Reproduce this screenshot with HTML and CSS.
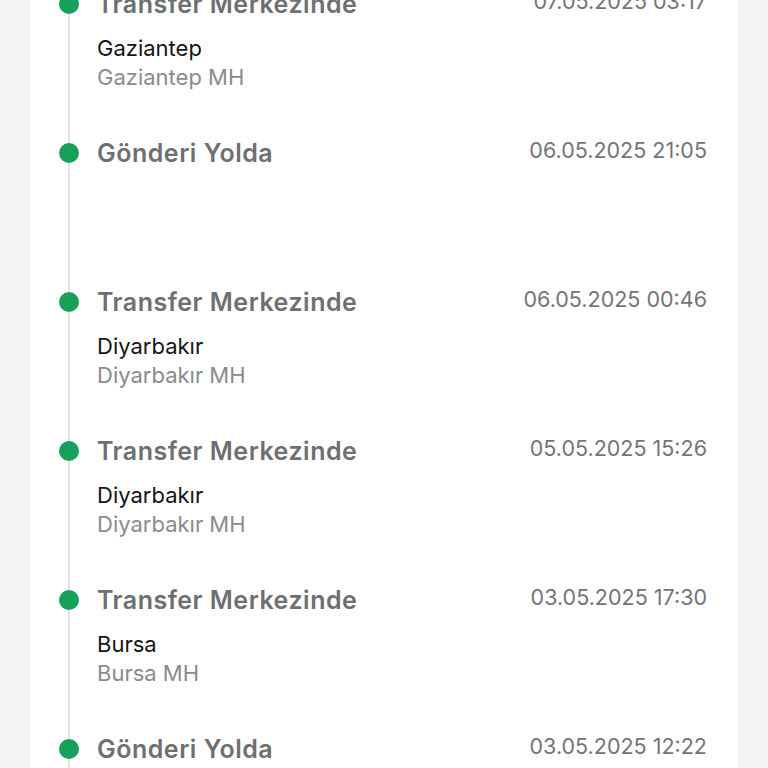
FILE: index.html
```html
<!DOCTYPE html>
<html lang="tr">
<head>
  <meta charset="UTF-8" />
  <title>Gönderi Hareketleri</title>
  <link rel="stylesheet" href="styles.css">
</head>
<body>

  <div class="card">
    <ul class="timeline">
      <li class="event">
        <span class="dot"></span>
        <div class="event-body">
          <div class="event-head">
            <span class="status">Transfer Merkezinde</span>
            <span class="date">07.05.2025 03:17</span>
          </div>
          <div class="city">Gaziantep</div>
          <div class="branch">Gaziantep MH</div>
        </div>
      </li>
      <li class="event">
        <span class="dot"></span>
        <div class="event-body">
          <div class="event-head">
            <span class="status">Gönderi Yolda</span>
            <span class="date">06.05.2025 21:05</span>
          </div>
          <div class="city"></div>
          <div class="branch"></div>
        </div>
      </li>
      <li class="event">
        <span class="dot"></span>
        <div class="event-body">
          <div class="event-head">
            <span class="status">Transfer Merkezinde</span>
            <span class="date">06.05.2025 00:46</span>
          </div>
          <div class="city">Diyarbakır</div>
          <div class="branch">Diyarbakır MH</div>
        </div>
      </li>
      <li class="event">
        <span class="dot"></span>
        <div class="event-body">
          <div class="event-head">
            <span class="status">Transfer Merkezinde</span>
            <span class="date">05.05.2025 15:26</span>
          </div>
          <div class="city">Diyarbakır</div>
          <div class="branch">Diyarbakır MH</div>
        </div>
      </li>
      <li class="event">
        <span class="dot"></span>
        <div class="event-body">
          <div class="event-head">
            <span class="status">Transfer Merkezinde</span>
            <span class="date">03.05.2025 17:30</span>
          </div>
          <div class="city">Bursa</div>
          <div class="branch">Bursa MH</div>
        </div>
      </li>
      <li class="event">
        <span class="dot"></span>
        <div class="event-body">
          <div class="event-head">
            <span class="status">Gönderi Yolda</span>
            <span class="date">03.05.2025 12:22</span>
          </div>
          <div class="city"></div>
          <div class="branch"></div>
        </div>
      </li>
    </ul>
  </div>

</body>
</html>
```

FILE: styles.css
```css
body {
  margin: 0;
  background-color: #f3f4f6;
  font-family: Inter, "Noto Sans", sans-serif;
  overflow: hidden;
}

.card {
  margin: -11px 30px 0 30px;
  background: #fff;
  box-shadow: 0 0 3px rgba(0, 0, 0, 0.06);
  padding: 0 31px 0 29px;
}

.timeline {
  list-style: none;
  margin: 0;
  padding: 0;
  position: relative;
}

/* vertical line behind the dots */
.timeline::before {
  content: "";
  position: absolute;
  left: 9px;
  top: 0;
  bottom: 0;
  width: 2px;
  background: #e2e3e5;
}

.event {
  display: flex;
  gap: 18px;
  height: 149px;
}

.dot {
  flex: none;
  width: 20px;
  height: 20px;
  margin-top: 5px;
  border-radius: 50%;
  background: #16a05a;
  position: relative;
}

.event-body {
  flex: 1;
}

.event-head {
  display: flex;
  justify-content: space-between;
  align-items: flex-start;
  height: 30px;
  margin-bottom: 15px;
}

.status {
  font-size: 25px;
  font-weight: 600;
  line-height: 30px;
  letter-spacing: 0.5px;
  color: #6d6f72;
}

.date {
  font-size: 21.5px;
  line-height: 24px;
  color: #737477;
}

.city {
  font-size: 22px;
  line-height: 29px;
  height: 29px;
  color: #151515;
}

.branch {
  font-size: 22px;
  line-height: 29px;
  height: 29px;
  color: #8a8b8e;
}
```
